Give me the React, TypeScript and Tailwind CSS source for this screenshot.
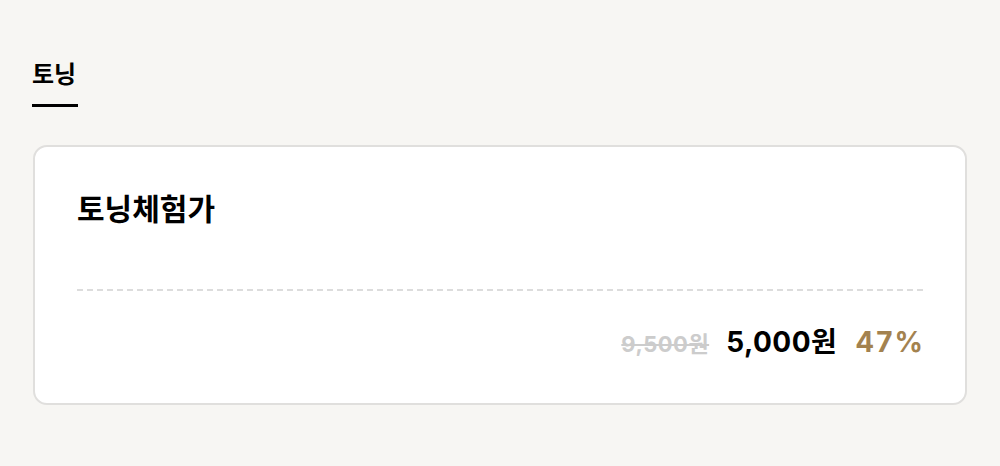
export default function App() {
  return (
    <div
      className="min-h-[466px] w-full bg-[#f7f6f3] px-8 pt-[56px]"
      style={{ fontFamily: '"Inter", "Noto Sans CJK KR", sans-serif' }}
    >
      {/* Tab */}
      <div className="flex">
        <div className="flex flex-col">
          <span className="text-[24px] font-bold leading-[38px] text-black">토닝</span>
          <div className="mt-[10px] h-[3px] w-[46px] bg-black" />
        </div>
      </div>

      {/* Card */}
      <div className="mt-[38px] mr-[1px] ml-[1px] rounded-[14px] border-2 border-[#e0dfdd] bg-white px-[42px] pt-[38px] pb-[40px]">
        <h2 className="text-[30px] font-bold leading-[48px] text-black">토닝체험가</h2>
        <div className="mt-[56px] border-t-2 border-dashed border-[#dcdcdc]" />
        <div className="mt-[30px] flex items-baseline justify-end">
          <span className="text-[22px] font-bold tracking-[0.5px] text-[#cccccc] line-through">9,500원</span>
          <span className="ml-[17px] text-[28px] font-bold tracking-[0.5px] text-black">5,000원</span>
          <span className="ml-[18px] -mr-[2px] text-[28px] font-bold tracking-[2px] text-[#a3824f]">47%</span>
        </div>
      </div>
    </div>
  );
}
